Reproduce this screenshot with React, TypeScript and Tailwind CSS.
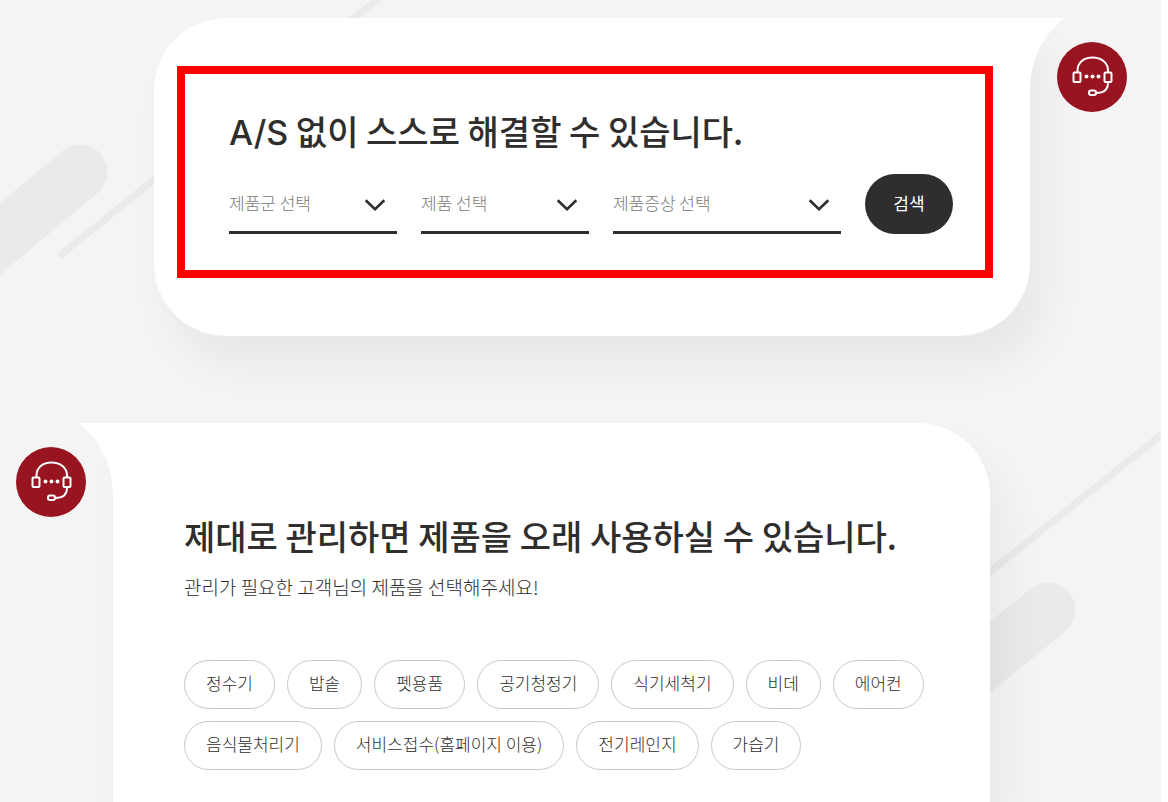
import type { ReactNode } from "react";

const PRODUCTS = [
  "정수기",
  "밥솥",
  "펫용품",
  "공기청정기",
  "식기세척기",
  "비데",
  "에어컨",
  "음식물처리기",
  "서비스접수(홈페이지 이용)",
  "전기레인지",
  "가습기",
];

const FILTERS = [
  { id: "group", label: "제품군 선택" },
  { id: "product", label: "제품 선택" },
  { id: "symptom", label: "제품증상 선택" },
];

// ── Headset avatar ────────────────────────────────────────────────────────────

function Avatar() {
  return (
    <div className="z-10 mt-6 size-[70px] shrink-0 rounded-full bg-[#971420]">
      <svg viewBox="0 0 70 70" className="size-full" fill="none" stroke="#fff" strokeWidth={2}>
        <path d="M20.500 30V28.500C20.500 20.500 27 15.500 35.500 15.500S51 20.500 51 28.500V30" />
        <rect x="16.500" y="30.500" width="7" height="9.500" rx="1" />
        <rect x="47.500" y="30.500" width="7" height="9.500" rx="1" />
        <path d="M51 40.500C51 47 47 51 39 51" />
        <rect x="32" y="48.500" width="7" height="4.500" rx="2" />
        <g fill="#fff" stroke="none">
          <circle cx="29.500" cy="34.500" r="2" />
          <circle cx="35.500" cy="34.500" r="2" />
          <circle cx="41.500" cy="34.500" r="2" />
        </g>
      </svg>
    </div>
  );
}

// ── Select with underline ─────────────────────────────────────────────────────

function FilterSelect({ id, label }: { id: string; label: string }) {
  return (
    <div className="relative min-w-0">
      <select
        id={id}
        aria-label={label}
        className="h-[60px] w-full appearance-none border-b-3 border-[#2f2e2d] bg-transparent pr-10 text-[17px] font-light text-[#7c7b77] outline-none"
      >
        <option>{label}</option>
      </select>
      <svg
        className="pointer-events-none absolute right-3 top-6 h-3.5 w-5"
        viewBox="0 0 20 14"
        fill="none"
        stroke="#2f2e2d"
        strokeWidth={2.6}
      >
        <path d="M0.700 2.300L10 11.300L19.300 2.300" />
      </svg>
    </div>
  );
}

function Title({ children }: { children: ReactNode }) {
  return <h2 className="text-[34px] font-medium leading-[42px]">{children}</h2>;
}

export default function App() {
  return (
    <div className="min-h-screen bg-white pr-[7px] font-['Noto_Sans_CJK_KR',sans-serif] text-[#2f2e2d]">
      <main className="relative flex min-h-screen flex-col overflow-hidden bg-[#f4f4f4] pt-[18px]">
        {/* Diagonal strokes behind the bubbles */}
        <svg
          className="absolute left-0 top-0 h-[300px] w-[400px]"
          viewBox="0 0 400 300"
          stroke="#eaeaea"
          strokeLinecap="round"
        >
          <path d="M-60 289L80 172" strokeWidth={55} />
          <path d="M62 254L384 -6" strokeWidth={7} />
        </svg>
        <svg
          className="absolute right-0 top-[400px] h-[400px] w-[240px]"
          viewBox="0 0 240 400"
          stroke="#eaeaea"
          strokeLinecap="round"
        >
          <path d="M0 314L127 210" strokeWidth={55} />
          <path d="M0 227L260 19" strokeWidth={7} />
        </svg>

        {/* Self-service search */}
        <section className="relative flex items-start gap-[27px] pl-[154px] pr-[34px]">
          <div className="relative min-w-0 flex-1 rounded-[72px] rounded-tr-none bg-white pb-[58px] pl-[23px] pr-[37px] pt-12 shadow-[16px_30px_44px_rgba(0,0,0,0.05)]">
            <svg className="absolute left-full top-0 h-[74px] w-[35px]" viewBox="0 0 35 74" fill="#fff">
              <path d="M-1 0H35C13 16 0 42 0 74H-1Z" />
            </svg>
            <form
              className="border-8 border-[#ff0000] pb-9 pl-11 pr-8 pt-9"
              onSubmit={(e) => e.preventDefault()}
            >
              <Title>
                <span className="font-['Inter',sans-serif] leading-none">A/S</span> 없이 스스로 해결할 수 있습니다.
              </Title>
              <div className="mt-[22px] grid grid-cols-[14fr_14fr_19fr_88px] gap-6">
                {FILTERS.map((f) => (
                  <FilterSelect key={f.id} id={f.id} label={f.label} />
                ))}
                <button type="submit" className="h-[60px] rounded-[30px] bg-[#2f2e2d] pb-0.5 text-[17px] text-white">
                  검색
                </button>
              </div>
            </form>
          </div>
          <Avatar />
        </section>

        {/* Product care */}
        <section className="relative mt-[87px] flex flex-1 items-stretch gap-[27px] pl-4 pr-[171px]">
          <Avatar />
          <div className="relative min-w-0 flex-1 rounded-tr-[72px] bg-white pb-8 pl-[71px] pr-[60px] pt-[92px] shadow-[16px_30px_44px_rgba(0,0,0,0.05)]">
            <svg className="absolute right-full top-0 h-[74px] w-[35px]" viewBox="0 0 35 74" fill="#fff">
              <path d="M36 0H0C22 16 35 42 35 74H36Z" />
            </svg>
            <Title>제대로 관리하면 제품을 오래 사용하실 수 있습니다.</Title>
            <p className="mt-4 text-[19px] font-light leading-7">관리가 필요한 고객님의 제품을 선택해주세요!</p>
            <ul className="mt-[59px] flex flex-wrap gap-3">
              {PRODUCTS.map((name) => (
                <li key={name}>
                  <button
                    type="button"
                    className="h-[49px] rounded-full border border-[#c8c7c5] bg-white px-[21px] pb-1 text-[17px] font-light"
                  >
                    {name}
                  </button>
                </li>
              ))}
            </ul>
          </div>
        </section>
      </main>
    </div>
  );
}
